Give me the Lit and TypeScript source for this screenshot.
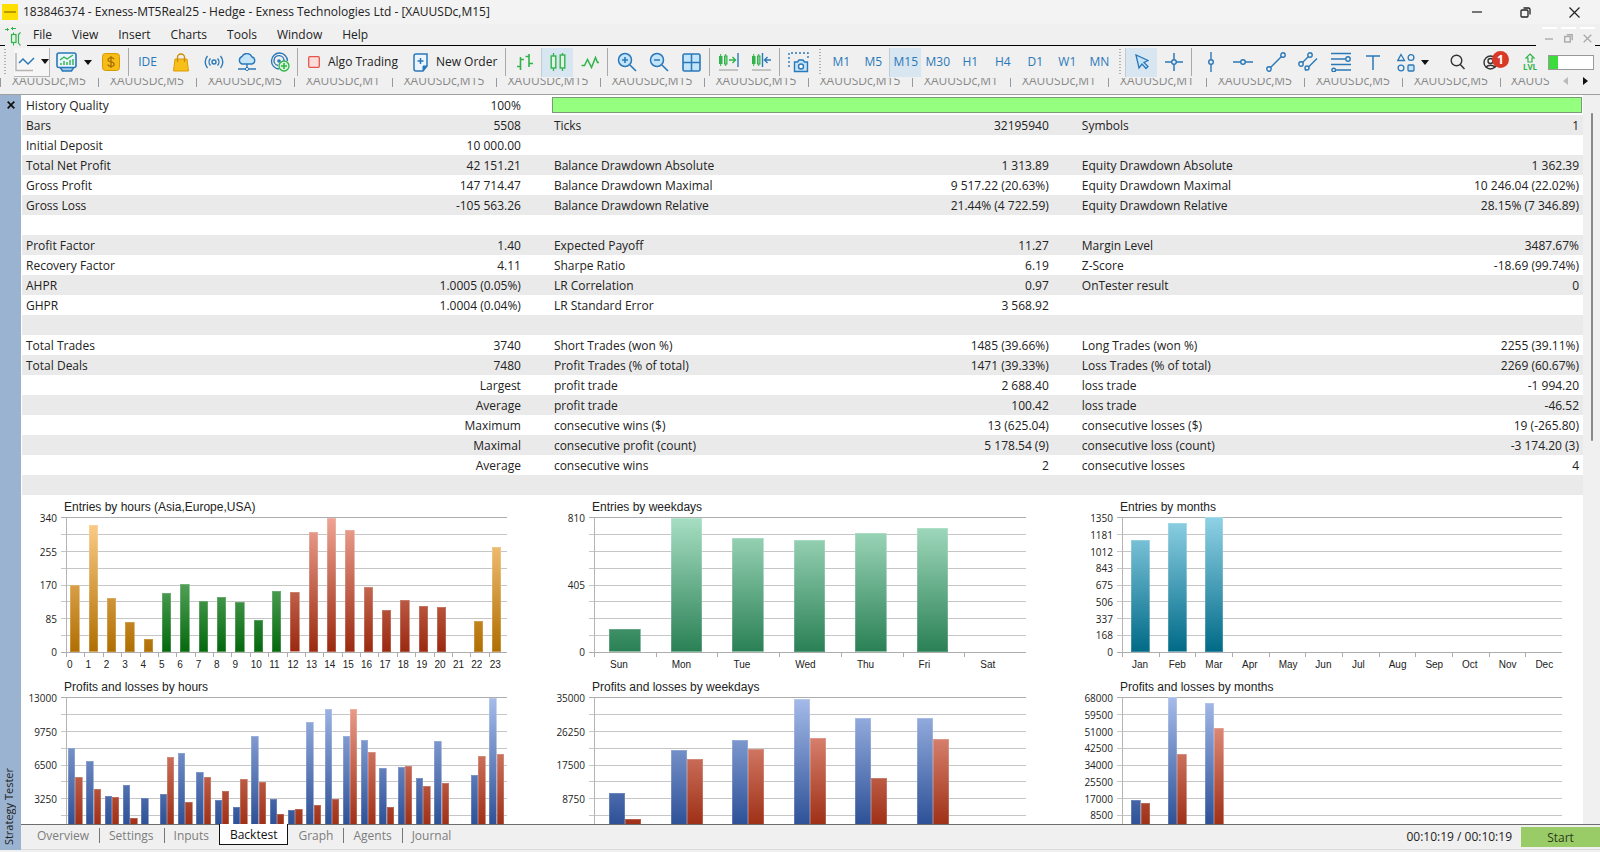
import { LitElement, html, css, nothing } from "lit";
import { customElement, property } from "lit/decorators.js";
import { classMap } from "lit/directives/class-map.js";
import { styleMap } from "lit/directives/style-map.js";

const BLUE = "#2a78b8";
const GREEN = "#2fb34a";
const SKY = "#c4e4fa";

const icon = (w: number, h: number, body: string) =>
  html`<svg width=${w} height=${h} viewBox="0 0 ${w} ${h}" fill="none" aria-hidden="true" .innerHTML=${body}></svg>`;

const icons: Record<string, unknown> = {
  line: icon(20, 22, `<path d="M1 2v17.500h17" stroke="#b5b5b5" stroke-width="1.500"/><path d="M4 12l4-4 5 5 6-6" stroke="${BLUE}" stroke-width="1.500"/>`),
  indicators: icon(22, 22, `<path d="M4 16l2.500 4h9l2.500-4" fill="#9ecbea" stroke="${BLUE}" stroke-width="1.500"/><rect x="1" y="2" width="19" height="14.500" rx="2" fill="#e9f5ff" stroke="${BLUE}" stroke-width="1.600"/><path d="M4 9l4-3 3 2 6-4" stroke="${GREEN}" stroke-width="1.300"/><path d="M5 14v-2M8 14v-4M11 14v-3M14 14v-5M17 14v-6" stroke="${GREEN}" stroke-width="1.400"/>`),
  dollar: icon(18, 18, `<rect x=".5" y=".5" width="17" height="17" rx="3" fill="#f6bd16" stroke="#d99a00"/><path d="M12 6.200C11.500 5 10.400 4.600 9 4.600 7.300 4.600 6 5.400 6 6.700c0 3 6.200 1.500 6.200 4.600 0 1.300-1.400 2.100-3.200 2.100-1.600 0-2.800-.6-3.200-1.900M9 3v12" stroke="#a46b00" stroke-width="1.200"/>`),
  bag: icon(16, 19, `<path d="M2 6h12l1.500 12H.5z" fill="#f8bf1a" stroke="#dd9b00"/><path d="M4.500 9V4.500a3.500 3.500 0 0 1 7 0V9" stroke="#c98b00" stroke-width="1.300"/>`),
  signal: icon(20, 14, `<circle cx="10" cy="7" r="2" stroke="${BLUE}" stroke-width="1.400"/><path d="M6.500 3.500a5 5 0 0 0 0 7M13.500 3.500a5 5 0 0 1 0 7M3.500 1a9 9 0 0 0 0 12M16.500 1a9 9 0 0 1 0 12" stroke="${BLUE}" stroke-width="1.400"/>`),
  cloud: icon(20, 18, `<path d="M5 11a4 4 0 0 1 0-7.500A5.500 5.500 0 0 1 15 4a3.600 3.600 0 0 1 0 7z" fill="${SKY}" stroke="${BLUE}" stroke-width="1.400"/><path d="M10 11v4M1 16h7M12 16h7" stroke="${BLUE}" stroke-width="1.400"/><circle cx="10" cy="16" r="1.600" stroke="${BLUE}"/>`),
  target: icon(20, 20, `<path d="M9 17a8 8 0 1 1 8.500-8M8 13.500A5 5 0 1 1 14 9" stroke="${BLUE}" stroke-width="1.400"/><circle cx="9" cy="9" r="1.800" fill="${BLUE}"/><circle cx="14" cy="14" r="5" fill="#d9f5d9" stroke="${GREEN}" stroke-width="1.300"/><path d="M14 11v6M11 14h6" stroke="${GREEN}" stroke-width="1.600"/>`),
  stop: icon(12, 12, `<rect x=".7" y=".7" width="10.600" height="10.600" rx="1" fill="#fbdcd8" stroke="#e4564a" stroke-width="1.300"/>`),
  order: icon(15, 19, `<path d="M3 1h11v12l-4 5H3a2 2 0 0 1-2-2V3a2 2 0 0 1 2-2z" fill="#eaf5ff" stroke="${BLUE}" stroke-width="1.500"/><path d="M14 13h-4v5" stroke="${BLUE}" fill="${BLUE}"/><path d="M7.500 5v6M4.500 8h6" stroke="${BLUE}" stroke-width="1.500"/>`),
  bars: icon(18, 18, `<path d="M4.500 4v13M4.500 6.500H8M1 13.500h3.500M13 1v13M13 3.500H9.500M13 10.500h4" stroke="${GREEN}" stroke-width="1.600"/>`),
  candles: icon(16, 20, `<path d="M3.500 1v18M12.500 1v18" stroke="${GREEN}" stroke-width="1.300"/><rect x="1.200" y="4" width="4.600" height="12" fill="#e1f4e4" stroke="${GREEN}" stroke-width="1.400"/><rect x="10.200" y="3" width="4.600" height="13" fill="#e1f4e4" stroke="${GREEN}" stroke-width="1.400"/>`),
  zigzag: icon(18, 14, `<path d="M.5 10.500h3l3-6 4 8 4-10 2 5h1.500" stroke="${GREEN}" stroke-width="1.500"/>`),
  zoomIn: icon(20, 20, `<circle cx="8" cy="8" r="6.500" fill="${SKY}" stroke="${BLUE}" stroke-width="1.500"/><path d="M13 13l6 6M8 5v6M5 8h6" stroke="${BLUE}" stroke-width="1.600"/>`),
  zoomOut: icon(20, 20, `<circle cx="8" cy="8" r="6.500" fill="${SKY}" stroke="${BLUE}" stroke-width="1.500"/><path d="M13 13l6 6M5 8h6" stroke="${BLUE}" stroke-width="1.600"/>`),
  tiles: icon(19, 19, `<rect x="1" y="1" width="17" height="17" rx="1.500" fill="${SKY}" stroke="${BLUE}" stroke-width="1.600"/><path d="M9.500 1v17M1 9.500h17" stroke="${BLUE}" stroke-width="1.500"/>`),
  autoscroll: icon(21, 20, `<path d="M2.700 2v12M7.700 2v12" stroke="${GREEN}"/><rect x="1" y="4" width="3.500" height="8" fill="${GREEN}"/><rect x="6.500" y="4" width="2.500" height="8" fill="#7fd08c" stroke="${GREEN}"/><path d="M11 8h6M14.500 5l3 3-3 3" stroke="${GREEN}" stroke-width="1.400"/><path d="M20 1v14" stroke="${BLUE}" stroke-width="1.400"/><path d="M1 18h19" stroke="#b5b5b5" stroke-width="1.500"/>`),
  shift: icon(21, 20, `<path d="M2.700 2v12M7.700 2v12" stroke="${GREEN}"/><rect x="1" y="4" width="3.500" height="8" fill="${GREEN}"/><rect x="6.500" y="4" width="2.500" height="8" fill="#7fd08c" stroke="${GREEN}"/><path d="M11.500 1v14M20 8h-6M16.500 5l-3 3 3 3" stroke="${BLUE}" stroke-width="1.400"/><path d="M1 18h19" stroke="#b5b5b5" stroke-width="1.500"/>`),
  camera: icon(21, 21, `<path d="M1 15V1h19v6" stroke="${BLUE}" stroke-width="1.400" stroke-dasharray="2 2"/><path d="M6.500 10h3l1.500-2h4l1.500 2h3v9.500h-13z" fill="${SKY}" stroke="${BLUE}" stroke-width="1.400"/><circle cx="13" cy="14.500" r="2.500" fill="#fff" stroke="${BLUE}" stroke-width="1.400"/>`),
  cursor: icon(14, 16, `<path d="M1 1l3 13 3-4 4 4.500 2-2L9 8.500l4-2z" fill="${SKY}" stroke="${BLUE}" stroke-width="1.300"/>`),
  cross: icon(18, 18, `<path d="M9 0v6.500M9 11.500V18M0 9h6.500M11.500 9H18" stroke="${BLUE}" stroke-width="1.500"/><circle cx="9" cy="9" r="2.300" stroke="${BLUE}" stroke-width="1.400"/>`),
  vline: icon(8, 20, `<path d="M4 0v7.500M4 12.500V20" stroke="${BLUE}" stroke-width="1.400"/><circle cx="4" cy="10" r="2.300" stroke="${BLUE}" stroke-width="1.400"/>`),
  hline: icon(20, 8, `<path d="M0 4h7.500M12.500 4H20" stroke="${BLUE}" stroke-width="1.400"/><circle cx="10" cy="4" r="2.300" stroke="${BLUE}" stroke-width="1.400"/>`),
  trend: icon(20, 20, `<path d="M4.500 15.500l11-11" stroke="${BLUE}" stroke-width="1.400"/><circle cx="3" cy="17" r="2.200" stroke="${BLUE}" stroke-width="1.400"/><circle cx="17" cy="3" r="2.200" stroke="${BLUE}" stroke-width="1.400"/>`),
  channel: icon(20, 20, `<path d="M4.500 10.500l6-6M7 18.500L19 6.500" stroke="${BLUE}" stroke-width="1.400"/><circle cx="3" cy="12" r="2.200" stroke="${BLUE}" stroke-width="1.400"/><circle cx="12" cy="3" r="2.200" stroke="${BLUE}" stroke-width="1.400"/><circle cx="9" cy="16" r="2" fill="#f0f0f0" stroke="${BLUE}" stroke-width="1.400"/>`),
  fibo: icon(20, 20, `<path d="M0 1.500h20M0 7h14.500M0 12.500h20M5 18h15" stroke="${BLUE}" stroke-width="1.400"/><circle cx="17" cy="7" r="2.200" stroke="${BLUE}" stroke-width="1.400"/><circle cx="2.700" cy="18" r="1.800" stroke="${BLUE}" stroke-width="1.400"/>`),
  text: icon(14, 15, `<path d="M0 1h14M7 1v14" stroke="${BLUE}" stroke-width="1.500"/>`),
  shapes: icon(18, 19, `<path d="M4 1.500L7.500 7.500H.8z" stroke="${BLUE}" stroke-width="1.300"/><circle cx="14" cy="4.500" r="2.900" stroke="${BLUE}" stroke-width="1.300"/><circle cx="4" cy="15" r="2.900" stroke="${BLUE}" stroke-width="1.300"/><rect x="11" y="12" width="6" height="6" rx="1" fill="${SKY}" stroke="${BLUE}" stroke-width="1.300"/>`),
  search: icon(15, 16, `<circle cx="6.500" cy="6.500" r="5.300" stroke="#333" stroke-width="1.400"/><path d="M10.300 10.500L14.500 15" stroke="#333" stroke-width="1.500"/>`),
  user: icon(15, 15, `<circle cx="7.500" cy="7.500" r="6.500" stroke="#333" stroke-width="1.400"/><circle cx="7.500" cy="6" r="2.500" stroke="#333" stroke-width="1.400"/><path d="M3 12.500c1.500-3 7.500-3 9 0" stroke="#333" stroke-width="1.400"/>`),
  level: icon(12, 10, `<path d="M6 1l4 4H8v4H4V5H2z" stroke="${GREEN}" stroke-width="1.200"/>`),
  caret: icon(8, 5, `<path d="M0 0h8L4 5z" fill="#111"/>`),
  min: icon(10, 10, `<path d="M0 5h10" stroke="currentColor" stroke-width="1.200"/>`),
  restore: icon(11, 11, `<rect x="1" y="3" width="7" height="7" rx="1" stroke="currentColor" stroke-width="1.300"/><path d="M3.500 1h5a1.500 1.500 0 0 1 1.500 1.500v5" stroke="currentColor" stroke-width="1.300"/>`),
  close: icon(11, 11, `<path d="M.5.5l10 10M10.500.5l-10 10" stroke="currentColor" stroke-width="1.200"/>`),
  minSmall: icon(8, 8, `<path d="M0 4h8" stroke="#aaa" stroke-width="1.400"/>`),
  restoreSmall: icon(9, 9, `<rect x=".7" y="2.500" width="5.500" height="5.500" stroke="#aaa" stroke-width="1.400"/><path d="M2.800.8h5.400v5.400" stroke="#aaa" stroke-width="1.400"/>`),
  closeSmall: icon(9, 9, `<path d="M.7.7l7.600 7.600M8.300.7L.7 8.300" stroke="#aaa" stroke-width="1.300"/>`),
  dismiss: icon(8, 8, `<path d="M.7.7l6.600 6.600M7.300.7L.7 7.300" stroke="#111" stroke-width="1.700"/>`),
  mdi: icon(18, 20, `<path d="M0 2.500h4M6 1.500h5M2.500 1v3M7.500 0v3" stroke="${GREEN}"/><path d="M8.500 5.500v13" stroke="${GREEN}"/><rect x="6.500" y="7.500" width="4.500" height="8" fill="#dff5e2" stroke="${GREEN}" stroke-width="1.200"/><path d="M15.500 5.500l-2 2v8.500l2 2.500" stroke="${GREEN}" stroke-width="1.200"/>`),
  left: icon(5, 8, `<path d="M5 0v8L0 4z" fill="#bbb"/>`),
  right: icon(5, 8, `<path d="M0 0v8l5-4z" fill="#111"/>`),
};

const PALETTE: Record<string, string> = {
  amber: "linear-gradient(to top, #b06e00, #ffd08e)",
  green: "linear-gradient(to top, #04680c, #9ad6a0)",
  red: "linear-gradient(to top, #9a290f, #f0a595)",
  mint: "linear-gradient(to top, #2a8055, #a8dfc4)",
  teal: "linear-gradient(to top, #006a87, #90d2e6)",
  blue: "linear-gradient(to top, #264a92, #a6bcea)",
};

type Bar = { value: number; tone: string };
type ChartData = { title: string; max: number; ticks: string[]; labels: string[]; kind: string; slots: Bar[][] };

const single = (values: number[], tone: (i: number) => string): Bar[][] =>
  values.map((value, i) => [{ value, tone: tone(i) }]);
const pairs = (profit: number[], loss: number[]): Bar[][] =>
  profit.map((value, i) => [{ value, tone: "blue" }, { value: loss[i], tone: "red" }]);

const HOURS = Array.from({ length: 24 }, (_, i) => String(i));
const DAYS = ["Sun", "Mon", "Tue", "Wed", "Thu", "Fri", "Sat"];
const MONTHS = ["Jan", "Feb", "Mar", "Apr", "May", "Jun", "Jul", "Aug", "Sep", "Oct", "Nov", "Dec"];
const rest = (n: number) => new Array(n).fill(0);

const CHARTS: ChartData[] = [
  {
    title: "Entries by hours (Asia,Europe,USA)", max: 340, ticks: ["340", "255", "170", "85", "0"], labels: HOURS, kind: "hours",
    slots: single(
      [170, 319, 137, 76, 34, 149, 172, 129, 138, 126, 81, 154, 150, 302, 337, 307, 165, 106, 131, 117, 114, 0, 79, 264],
      (i) => (i < 5 || i > 20 ? "amber" : i < 12 ? "green" : "red"),
    ),
  },
  {
    title: "Entries by weekdays", max: 810, ticks: ["810", "405", "0"], labels: DAYS, kind: "days",
    slots: single([136, 802, 682, 674, 712, 744, 0], () => "mint"),
  },
  {
    title: "Entries by months", max: 1350, ticks: ["1350", "1181", "1012", "843", "675", "506", "337", "168", "0"], labels: MONTHS, kind: "months",
    slots: single([1120, 1287, 1350, ...rest(9)], () => "teal"),
  },
  {
    title: "Profits and losses by hours", max: 13000, ticks: ["13000", "9750", "6500", "3250", ""], labels: [], kind: "hours paired",
    slots: pairs(
      [8121, 6869, 3499, 4526, 3306, 3627, 7575, 5810, 3081, 2375, 9212, 3146, 2119, 10560, 11844, 9277, 8891, 6163, 6291, 5168, 8731, 0, 5521, 12936],
      [5328, 4173, 3338, 1380, 0, 7190, 2921, 5328, 3916, 5136, 4847, 1765, 2247, 2600, 3210, 11844, 7736, 2407, 6323, 4462, 4751, 0, 7319, 7511],
    ),
  },
  {
    title: "Profits and losses by weekdays", max: 35000, ticks: ["35000", "26250", "17500", "8750", ""], labels: [], kind: "days",
    slots: pairs([10025, 21346, 23765, 34568, 29469, 29469, 0], [3370, 18840, 21605, 24284, 14000, 24198, 0]),
  },
  {
    title: "Profits and losses by months", max: 68000, ticks: ["68000", "59500", "51000", "42500", "34000", "25500", "17000", "8500", ""], labels: [], kind: "months",
    slots: pairs([16286, 68000, 64810, ...rest(9)], [14607, 39289, 52217, ...rest(9)]),
  },
];

const ROWS: string[][] = [
  ["Bars", "5508", "Ticks", "32195940", "Symbols", "1"],
  ["Initial Deposit", "10 000.00", "", "", "", ""],
  ["Total Net Profit", "42 151.21", "Balance Drawdown Absolute", "1 313.89", "Equity Drawdown Absolute", "1 362.39"],
  ["Gross Profit", "147 714.47", "Balance Drawdown Maximal", "9 517.22 (20.63%)", "Equity Drawdown Maximal", "10 246.04 (22.02%)"],
  ["Gross Loss", "-105 563.26", "Balance Drawdown Relative", "21.44% (4 722.59)", "Equity Drawdown Relative", "28.15% (7 346.89)"],
  ["", "", "", "", "", ""],
  ["Profit Factor", "1.40", "Expected Payoff", "11.27", "Margin Level", "3487.67%"],
  ["Recovery Factor", "4.11", "Sharpe Ratio", "6.19", "Z-Score", "-18.69 (99.74%)"],
  ["AHPR", "1.0005 (0.05%)", "LR Correlation", "0.97", "OnTester result", "0"],
  ["GHPR", "1.0004 (0.04%)", "LR Standard Error", "3 568.92", "", ""],
  ["", "", "", "", "", ""],
  ["Total Trades", "3740", "Short Trades (won %)", "1485 (39.66%)", "Long Trades (won %)", "2255 (39.11%)"],
  ["Total Deals", "7480", "Profit Trades (% of total)", "1471 (39.33%)", "Loss Trades (% of total)", "2269 (60.67%)"],
  ["", "Largest", "profit trade", "2 688.40", "loss trade", "-1 994.20"],
  ["", "Average", "profit trade", "100.42", "loss trade", "-46.52"],
  ["", "Maximum", "consecutive wins ($)", "13 (625.04)", "consecutive losses ($)", "19 (-265.80)"],
  ["", "Maximal", "consecutive profit (count)", "5 178.54 (9)", "consecutive loss (count)", "-3 174.20 (3)"],
  ["", "Average", "consecutive wins", "2", "consecutive losses", "4"],
  ["", "", "", "", "", ""],
];

@customElement("bar-chart")
class BarChart extends LitElement {
  @property({ attribute: false }) data!: ChartData;

  static styles = css`
    :host { display: block; min-width: 0; font: 10px/12px "Liberation Sans", Arial, sans-serif; color: #222; }
    .title { margin: 0; padding: 2px 0 0 42px; font-size: 12px; line-height: 20px; font-weight: 400; white-space: nowrap; }
    .body { display: grid; grid-template-columns: 35px 1fr; column-gap: 4px; }
    .scale { display: flex; flex-direction: column; justify-content: space-between; padding-top: 1px;
      font-family: "Open Sans", "Noto Sans", sans-serif; text-align: right; height: 135px; }
    .scale span { height: 1px; line-height: 1px; }
    .plot { display: grid; height: 136px; }
    .plot > * { grid-area: 1 / 1; }
    .lines { display: flex; flex-direction: column; justify-content: space-between; }
    .lines i { height: 1px; background: #c6c6c6; }
    .lines i:first-child, .lines i:last-child { background: #adadad; }
    .bars { display: flex; margin-left: 5px; border-left: 1px solid #b4b4b4; }
    .slot { flex: 1; min-width: 0; display: flex; align-items: flex-end; padding-bottom: 1px; }
    .slot::before { content: ""; width: 23%; }
    .bar { width: 51%; box-sizing: border-box; background-size: 100% 135px; background-position: bottom;
      box-shadow: inset 0 0 0 1px rgba(255, 255, 255, 0.2); }
    .pair .bar { width: 26%; }
    .hours .slot::before { width: 18%; }
    .paired .slot::before { width: 5%; }
    .paired .bar { width: 40%; }
    .axis { grid-column: 2; display: flex; height: 22px; padding-left: 5px; }
    .axis span { flex: 1; min-width: 0; white-space: nowrap; padding-top: 6px; padding-left: 16px; box-sizing: border-box;
      background: linear-gradient(#adadad, #adadad) 0 0 / 1px 4px no-repeat; }
    .months .axis span { padding-left: 10px; }
    .hours .axis span { padding-left: 1px; }
    .hours .body { margin-right: 43px; }
    .days .body { margin-right: 52px; }
    .months .body { margin-right: 21px; }
  `;

  render() {
    const { title, max, ticks, labels, kind, slots } = this.data;
    return html`<section class=${kind}>
      <h3 class="title">${title}</h3>
      <div class="body">
        <div class="scale">${ticks.map((t) => html`<span>${t}</span>`)}</div>
        <div class="plot">
          <div class="lines">${Array.from({ length: 9 }, () => html`<i></i>`)}</div>
          <div class="bars">
            ${slots.map((slot) => html`<div class=${classMap({ slot: true, pair: slot.length > 1 })}>
              ${slot.map((b) => html`<div class="bar" style=${styleMap({ height: `${(b.value / max) * 100}%`, backgroundImage: PALETTE[b.tone] })}></div>`)}
            </div>`)}
          </div>
        </div>
        <div class="axis">${labels.map((l) => html`<span>${l}</span>`)}</div>
      </div>
    </section>`;
  }
}

@customElement("app-root")
class AppRoot extends LitElement {
  static styles = css`
    :host { display: flex; flex-direction: column; height: 100vh; overflow: hidden; background: #f0f0f0; color: #222;
      font: 12px/20px "Open Sans", "Noto Sans", sans-serif; }
    svg { display: block; flex: none; }
    button { font: inherit; color: inherit; background: none; border: 0; padding: 0; margin: 0; }
    .titlebar { display: flex; align-items: center; height: 24px; flex: none; background: #f3f3f3; }
    .logo { width: 16px; height: 16px; margin: 0 5px 0 2px; background: #ffdf00; display: grid; place-items: center; }
    .logo i { width: 12px; height: 2px; background: #b99b00; }
    .titlebar h1 { margin: 0; flex: 1; font-size: 12px; font-weight: 400; white-space: nowrap; }
    .window { display: flex; gap: 18px; padding-right: 10px; }
    .window button { width: 31px; height: 24px; display: grid; place-items: center; color: #222; }
    .menubar { display: flex; height: 21px; flex: none; border-bottom: 1px solid #000; }
    .mdi { width: 22px; height: 23px; margin-left: 5px; background: #f0f0f0; position: relative; z-index: 1; display: flex; align-items: flex-end; }
    .menus { display: flex; gap: 20px; padding-left: 6px; flex: 1; }
    .menus button { line-height: 20px; }
    .child { display: flex; gap: 4px; width: 59px; height: 24px; padding: 3px 0 0 6px; margin-right: 5px; background: #f0f0f0; position: relative; z-index: 1; box-sizing: border-box; }
    .child button { flex: 1; border-top: 2px solid #fff; display: flex; align-items: center; padding-left: 3px; }
    .toolbar { display: flex; align-items: center; height: 31px; flex: none; color: #2a78b8; white-space: nowrap; padding-top: 1px; box-sizing: border-box; }
    .grip { width: 2px; height: 26px; margin: 0 4px; background: repeating-linear-gradient(#b0b0b0 0 1px, transparent 1px 3px); }
    .toolbar button { width: 33px; height: 29px; display: flex; align-items: center; justify-content: center; gap: 6px; flex: none; }
    .toolbar .w32 { width: 32px; }
    .toolbar .on { background: #d8e6f2; border-left: 1px solid #c0ccd6; }
    .toolbar .raised { width: 36px; margin-left: 4px; background: #f6f6f6; border-right: 1px solid #b4b4b4; border-bottom: 1px solid #b4b4b4; }
    .toolbar .wide { width: 44px; padding-left: 3px; }
    .toolbar .label { width: auto; color: #222; padding: 0 7px 0 8px; gap: 8px; }
    .sep { width: 1px; height: 28px; background: #a9a9a9; margin: 0 2px 0 1px; flex: none; }
    .status { margin-left: auto; display: flex; align-items: center; padding-right: 6px; }
    .toolbar .account { position: relative; width: 32px; }
    .badge { position: absolute; left: 18px; top: 3px; width: 17px; height: 17px; border-radius: 50%; background: #d93a28; color: #fff; font-weight: 700; line-height: 17px; }
    .level { width: 36px; display: flex; flex-direction: column; align-items: center; font-size: 8px; line-height: 8px; font-weight: 700; color: #2fb34a; margin: 0 0 0 6px; }
    .meter { width: 46px; height: 15px; box-sizing: border-box; border: 1px solid #999; background: #fff; }
    .meter i { display: block; width: 21%; height: 100%; background: #3cdc3c; }
    .charts-tabs { display: flex; height: 17px; flex: none; overflow: hidden; border-bottom: 1px solid #a0a0a0; color: #888; }
    .charts-tabs div { flex: 1; min-width: 0; overflow: hidden; display: flex; height: 11px; margin-top: 1px; }
    .charts-tabs button { width: 98px; flex: none; height: 11px; line-height: 5px; box-sizing: border-box; text-align: center; overflow: hidden; padding-bottom: 6px;
      background: linear-gradient(#999, #999) 0 0 / 1px 9px no-repeat; }
    .charts-tabs .long { width: 104px; }
    .charts-tabs .cut { width: 50px; padding-left: 11px; text-align: left; }
    .charts-tabs nav { display: flex; gap: 15px; padding: 0 12px 0 13px; align-items: flex-start; }
    .charts-tabs nav button { width: auto; background: none; height: 8px; padding: 0; }
    .main { display: flex; flex: 1; min-height: 0; }
    .side { width: 21px; flex: none; background: #9ab3d1; display: flex; flex-direction: column; justify-content: space-between; align-items: center; padding: 5px 0; box-sizing: border-box; margin-bottom: 2px; }
    .side button { width: 9px; height: 10px; display: grid; place-items: center; }
    .side span { writing-mode: vertical-rl; transform: rotate(180deg); font-size: 11px; line-height: 18px; padding-left: 4px; }
    .panel { flex: 1; min-width: 0; display: flex; flex-direction: column; }
    .view { flex: 1; min-height: 0; display: flex; border-bottom: 1px solid #6e6e6e; }
    .report { flex: 1; min-width: 0; overflow: hidden; background: #fff; padding-left: 1px; }
    .scroll { width: 17px; padding: 18px 7px 0 8px; box-sizing: border-box; }
    .thumb { height: 328px; background: #8a8a8a; border-radius: 1px; }
    table { width: 100%; border-collapse: collapse; table-layout: fixed; }
    .cl { width: 17%; }
    .cv { width: 16.82%; }
    .ce { width: 15.36%; }
    td, th { height: 18px; padding: 2px 0 0 4px; font-weight: 400; text-align: left; line-height: 18px; white-space: nowrap; }
    td { text-align: right; padding: 2px 29px 0 0; }
    td:last-child { padding-right: 4px; }
    tr:nth-child(even) { background: #eaeaea; }
    table .quality { padding: 0 1px 0 2px; }
    .quality div { height: 16px; box-sizing: border-box; border: 1px solid #7b9a77; background: #95ff80; }
    .charts { display: grid; grid-template-columns: 528fr 528fr 505fr; }
    .foot { display: flex; height: 25px; flex: none; border-bottom: 1px solid #dadada; box-sizing: border-box; margin-bottom: 2px; color: #7d7d7d; }
    .tabs { display: flex; flex: 1; padding-left: 6px; }
    .tabs button { padding: 0 10px; height: 20px; line-height: 19px; position: relative; }
    .tabs button + button::before { content: ""; position: absolute; left: 0; top: 3px; height: 15px; width: 1px; background: #777; }
    .tabs .current { background: #fff; color: #111; border: 1px solid #111; border-top: 0; height: 21px; margin-top: -1px; line-height: 22px; }
    .tabs button.current::before, .tabs .current + button::before { display: none; }
    .time { color: #222; line-height: 24px; padding-right: 9px; }
    .foot .start { width: 79px; height: 20px; margin-top: 2px; background: #9c6; color: #2c3a1c; line-height: 19px; }
  `;

  private tool(name: string, label: string, cls = "") {
    return html`<button class=${cls} aria-label=${label}>${icons[name]}</button>`;
  }

  render() {
    const sep = html`<i class="sep"></i>`;
    const tabs = ["M5", "M5", "M5", "M1", "M15", "M15", "M15", "M15", "M15", "M1", "M1", "M1", "M5", "M5", "M5"];
    return html`
      <header class="titlebar">
        <span class="logo"><i></i></span>
        <h1>183846374 - Exness-MT5Real25 - Hedge - Exness Technologies Ltd - [XAUUSDc,M15]</h1>
        <div class="window">${this.tool("min", "Minimize")}${this.tool("restore", "Restore")}${this.tool("close", "Close")}</div>
      </header>
      <nav class="menubar">
        <span class="mdi">${icons.mdi}</span>
        <div class="menus">${["File", "View", "Insert", "Charts", "Tools", "Window", "Help"].map((m) => html`<button>${m}</button>`)}</div>
        <div class="child">${this.tool("minSmall", "Minimize chart")}${this.tool("restoreSmall", "Restore chart")}${this.tool("closeSmall", "Close chart")}</div>
      </nav>
      <div class="toolbar" role="toolbar">
        <i class="grip"></i>
        <button class="raised" aria-label="Line studies">${icons.line}${icons.caret}</button>
        <button class="wide" aria-label="Indicators">${icons.indicators}${icons.caret}</button>
        ${this.tool("dollar", "Symbols")}${sep}
        <button>IDE</button>
        ${this.tool("bag", "Market")}${this.tool("signal", "Signals")}${this.tool("cloud", "VPS")}${this.tool("target", "Copy trading")}${sep}
        <button class="label">${icons.stop}Algo Trading</button>
        <button class="label">${icons.order}New Order</button>${sep}
        ${this.tool("bars", "Bar chart")}${this.tool("candles", "Candlesticks", "w32 on")}${this.tool("zigzag", "Line chart")}${sep}
        ${this.tool("zoomIn", "Zoom in")}${this.tool("zoomOut", "Zoom out", "w32")}${this.tool("tiles", "Tile windows")}${sep}
        ${this.tool("autoscroll", "Auto scroll")}${this.tool("shift", "Chart shift")}${sep}
        ${this.tool("camera", "Screenshot")}
        <i class="grip"></i>
        ${["M1", "M5", "M15", "M30", "H1", "H4", "D1", "W1", "MN"].map((p) => html`<button class=${classMap({ w32: p !== "M30" && p !== "H4", on: p === "M15" })}>${p}</button>`)}
        <i class="grip"></i>
        ${this.tool("cursor", "Cursor", "w32 on")}${this.tool("cross", "Crosshair")}${sep}
        ${this.tool("vline", "Vertical line")}${this.tool("hline", "Horizontal line", "w32")}${this.tool("trend", "Trendline")}${this.tool("channel", "Channel", "w32")}${this.tool("fibo", "Fibonacci")}${this.tool("text", "Text", "w32")}
        <button class="wide" aria-label="Shapes">${icons.shapes}${icons.caret}</button>
        <div class="status">
          ${this.tool("search", "Search")}
          <button class="account" aria-label="Account">${icons.user}<span class="badge">1</span></button>
          <span class="level">${icons.level}LVL</span>
          <span class="meter"><i></i></span>
        </div>
      </div>
      <div class="charts-tabs">
        <div>${tabs.map((t) => html`<button class=${classMap({ long: t === "M15" })}>XAUUSDc,${t}</button>`)}<button class="cut">XAUUS</button></div>
        <nav>${this.tool("left", "Scroll left")}${this.tool("right", "Scroll right")}</nav>
      </div>
      <main class="main">
        <aside class="side"><button aria-label="Close panel">${icons.dismiss}</button><span>Strategy Tester</span></aside>
        <div class="panel">
          <div class="view">
            <div class="report">
              <table>
                <colgroup><col class="cl" /><col class="cv" /><col class="cl" /><col class="cv" /><col class="cl" /><col class="ce" /></colgroup>
                <tbody>
                  <tr><th scope="row">History Quality</th><td>100%</td><td class="quality" colspan="4"><div></div></td></tr>
                  ${ROWS.map((r) => html`<tr>${r.map((c, i) => (i % 2 ? html`<td>${c || nothing}</td>` : html`<th scope="row">${c || nothing}</th>`))}</tr>`)}
                </tbody>
              </table>
              <div class="charts">${CHARTS.map((c) => html`<bar-chart .data=${c}></bar-chart>`)}</div>
            </div>
            <div class="scroll"><div class="thumb"></div></div>
          </div>
          <footer class="foot">
            <div class="tabs">${["Overview", "Settings", "Inputs", "Backtest", "Graph", "Agents", "Journal"].map((t) => html`<button class=${classMap({ current: t === "Backtest" })}>${t}</button>`)}</div>
            <span class="time">00:10:19 / 00:10:19</span>
            <button class="start">Start</button>
          </footer>
        </div>
      </main>
    `;
  }
}
